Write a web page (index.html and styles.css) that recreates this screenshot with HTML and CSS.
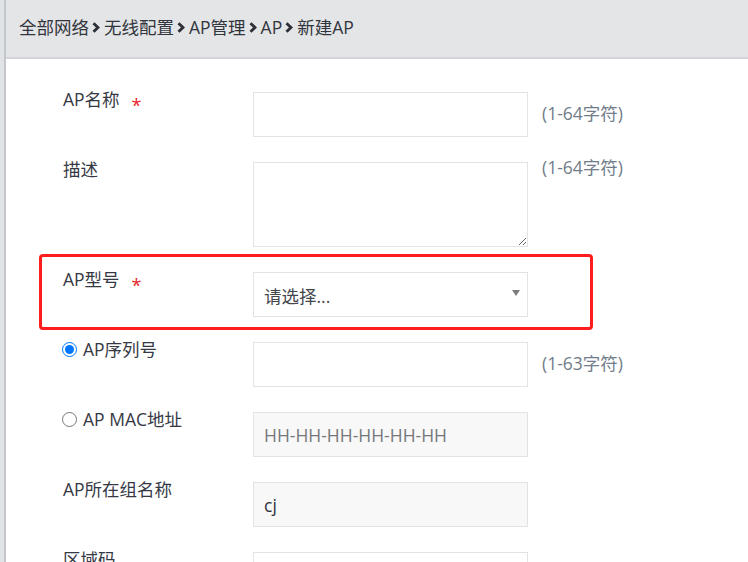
FILE: index.html
```html
<!DOCTYPE html>
<html lang="zh-CN">
<head>
<meta charset="utf-8">
<title>新建AP</title>
<link rel="stylesheet" href="styles.css">
</head>
<body>
<div class="frame">
  <div class="rail"></div>
  <div class="main">
    <div class="crumbs">
      <span>全部网络</span>
      <svg class="chev" viewBox="0 0 8 11" width="8" height="11"><polyline points="1.5,1.2 6,5.5 1.5,9.8"/></svg>
      <span>无线配置</span>
      <svg class="chev" viewBox="0 0 8 11" width="8" height="11"><polyline points="1.5,1.2 6,5.5 1.5,9.8"/></svg>
      <span>AP管理</span>
      <svg class="chev" viewBox="0 0 8 11" width="8" height="11"><polyline points="1.5,1.2 6,5.5 1.5,9.8"/></svg>
      <span>AP</span>
      <svg class="chev" viewBox="0 0 8 11" width="8" height="11"><polyline points="1.5,1.2 6,5.5 1.5,9.8"/></svg>
      <span>新建AP</span>
    </div>

    <form class="form">
      <div class="row">
        <div class="label"><span>AP名称</span><span class="req">*</span></div>
        <input class="field" type="text">
        <span class="hint">(1-64字符)</span>
      </div>

      <div class="row">
        <div class="label"><span>描述</span></div>
        <textarea class="field area"></textarea>
        <span class="hint hint-top">(1-64字符)</span>
      </div>

      <div class="row highlight">
        <div class="label"><span>AP型号</span><span class="req">*</span></div>
        <div class="select-wrap">
          <select class="field select"><option>请选择...</option></select>
        </div>
      </div>

      <div class="row">
        <label class="label radio-label"><input type="radio" name="idtype" checked><span>AP序列号</span></label>
        <input class="field" type="text">
        <span class="hint">(1-63字符)</span>
      </div>

      <div class="row">
        <label class="label radio-label"><input type="radio" name="idtype"><span>AP MAC地址</span></label>
        <input class="field" type="text" placeholder="HH-HH-HH-HH-HH-HH" disabled>
      </div>

      <div class="row">
        <div class="label"><span>AP所在组名称</span></div>
        <input class="field" type="text" value="cj" disabled>
      </div>

      <div class="row">
        <div class="label"><span>区域码</span></div>
        <input class="field" type="text">
      </div>
    </form>
  </div>
</div>
</body>
</html>
```

FILE: styles.css
```css
html, body {
  margin: 0;
  padding: 0;
  background: #ffffff;
}

body {
  font-family: "Open Sans", "Noto Sans CJK SC", sans-serif;
  font-size: 17.5px;
  color: #383b43;
  overflow: hidden;
}

.frame {
  display: flex;
  min-height: 562px;
}

.rail {
  width: 4px;
  flex: none;
  background: #e1e4e7;
  border-right: 2px solid #c3c7cb;
}

.main {
  flex: 1;
  min-width: 0;
}

.crumbs {
  height: 59px;
  box-sizing: border-box;
  background: #e4e5e7;
  border-bottom: 2px solid #d3d5d8;
  display: flex;
  align-items: center;
  padding: 0 0 3px 13px;
  color: #32353d;
  line-height: 20px;
}

.chev {
  margin: 0 4px 0 3px;
  flex: none;
}

.chev polyline {
  fill: none;
  stroke: #2c2f36;
  stroke-width: 2.9;
  stroke-linecap: butt;
  stroke-linejoin: miter;
}

.form {
  padding: 33px 0 0 57px;
  display: flex;
  flex-direction: column;
  gap: 25px;
}

.row {
  display: flex;
  align-items: flex-start;
}

.label {
  width: 190px;
  flex: none;
  display: flex;
  align-items: flex-start;
  line-height: 16px;
  margin-top: -1px;
  color: #363944;
}

.req {
  color: #e8262b;
  margin-left: 12px;
  margin-top: 7px;
  font-size: 18px;
  line-height: 14px;
}

.radio-label input {
  margin: 1px 6px 0 -1px;
  width: 15px;
  height: 15px;
  flex: none;
}

.field {
  box-sizing: border-box;
  width: 275px;
  height: 45px;
  border: 1px solid #e3e3e3;
  border-radius: 0;
  background: #ffffff;
  padding: 0 10px;
  font-family: inherit;
  font-size: 17.5px;
  color: #383b43;
  outline: none;
  margin: 0;
}

.field:disabled {
  background: #f8f8f8;
  color: #30333b;
}

.field::placeholder {
  color: #75777b;
}

.area {
  height: 85px;
  resize: both;
  padding: 6px 10px;
}

.select-wrap {
  position: relative;
  width: 275px;
}

.select-wrap::after {
  content: "";
  position: absolute;
  right: 8px;
  top: 18px;
  border-left: 4px solid transparent;
  border-right: 4px solid transparent;
  border-top: 6px solid #7d7d7d;
}

.select {
  -webkit-appearance: none;
  appearance: none;
  padding-top: 3px;
  color: #43464d;
}

.hint {
  margin: 0 0 4px 14px;
  color: #717d8a;
  line-height: 16px;
  align-self: center;
}

.hint-top {
  align-self: flex-start;
  margin-top: -3px;
}

.highlight {
  border: 3px solid #fe1c1c;
  border-radius: 4px;
  margin: -18px 0 -13px -24px;
  padding: 15px 62px 10px 21px;
  align-self: flex-start;
}
```
